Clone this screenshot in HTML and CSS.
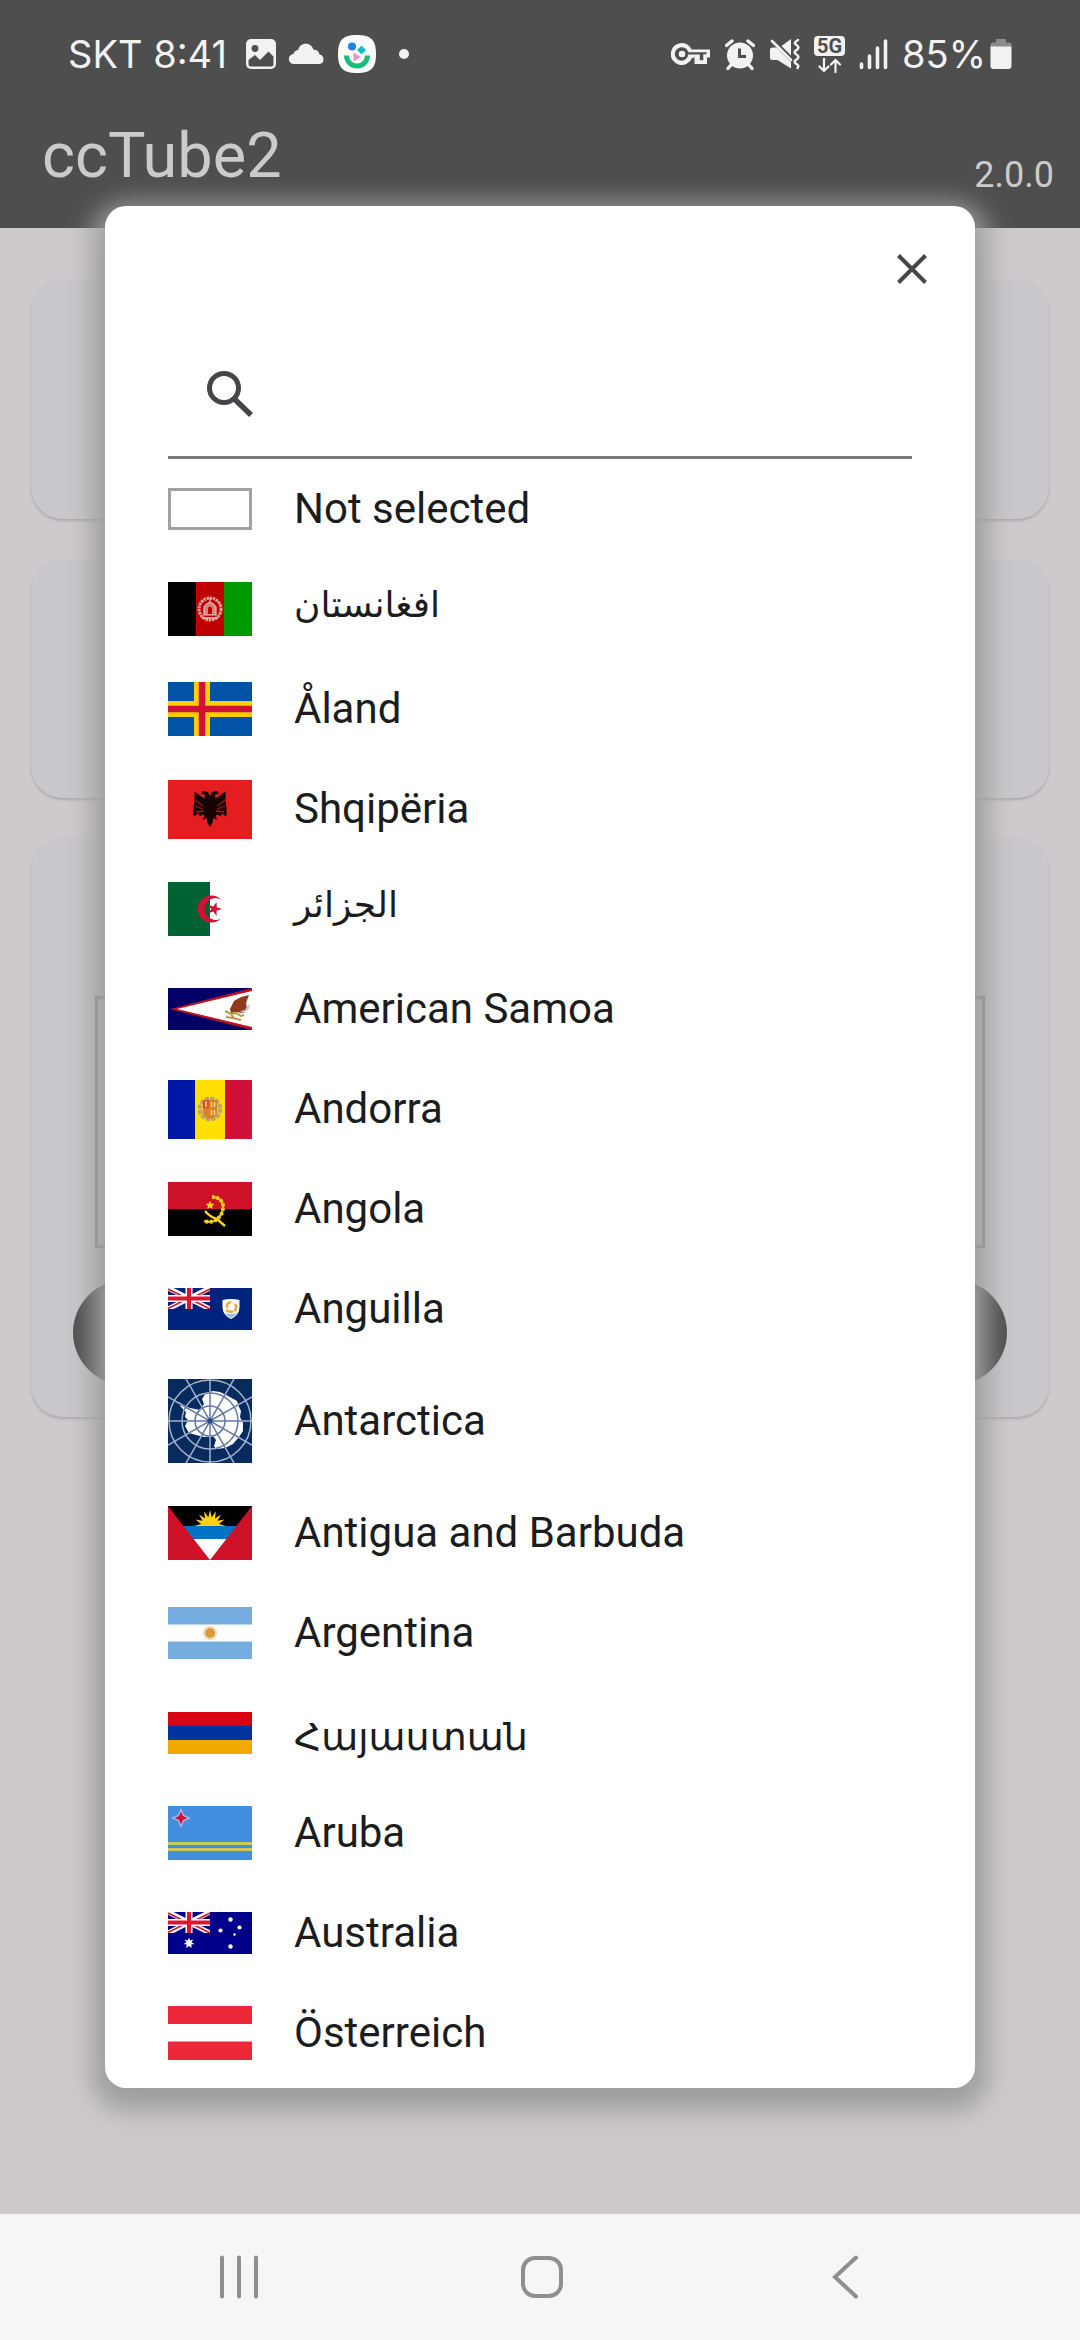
FILE: index.html
```
<!DOCTYPE html>
<html lang="en">
  <head>
    <meta charset="UTF-8">
    <meta name="viewport" content="width=device-width, initial-scale=1">
    <title>ccTube2</title>
    <link rel="stylesheet" href="styles.css">
  </head>
  <body>
    <svg class="defs" aria-hidden="true">
      <symbol id="union" viewBox="0 0 42 21">
        <path class="uj-w" stroke-width="5" d="M0 0L42 21M42 0L0 21"/>
        <path class="uj-r" stroke-width="1.6" d="M0 1L21 11.5M42 1L21 11.5M0 20.5L21 10M42 21L21 10.5"/>
        <path class="uj-w" stroke-width="7" d="M21 0V21M0 10.5H42"/>
        <path class="uj-r" stroke-width="4" d="M21 0V21M0 10.5H42"/>
      </symbol>
    </svg>

    <header class="top">
      <div class="statusbar">
        <div class="status-group status-left">
          <span class="status-text">SKT 8:41</span>
          <svg width="32" height="32" viewBox="0 0 32 32">
            <rect x="1" y="1" width="30" height="30" rx="5" fill="#f2f2f2"/>
            <circle cx="10" cy="10.500" r="3.400" fill="#4e4e4e"/>
            <path d="M3.500 22l6.500-5 5 5 8.500-8.500 5 5V26a2.500 2.500 0 0 1-2.500 2.500H6A2.500 2.500 0 0 1 3.500 26z" fill="#4e4e4e"/>
          </svg>
          <svg width="36" height="22" viewBox="0 0 36 22">
            <path d="M5 21a5 5 0 0 1-.5-10C5 8 7 7 9 7.200 10 3 13 .8 16.500.8c4.500 0 7 2.700 8 6 3-.4 5.500 1.700 6 4.700A4.900 4.900 0 0 1 31 21z" fill="#f2f2f2"/>
          </svg>
          <svg width="40" height="40" viewBox="0 0 40 40">
            <path d="M20 1c14 0 19 5 19 19s-5 19-19 19S1 34 1 20 6 1 20 1z" fill="#fff"/>
            <circle cx="15" cy="12.500" r="4" fill="#1c83e8"/>
            <path d="M24.500 11.500l4.500 4.500-4.500 4.500L20 16z" fill="#11bfc4"/>
            <path d="M16.500 18.500l7 4.500-7 4.500z" fill="#f48fc6"/>
            <path d="M9.500 21.500a10.500 10.500 0 0 0 21 0" fill="none" stroke="#17bd79" stroke-width="5"/>
          </svg>
          <span class="dot"></span>
        </div>
        <div class="status-group status-right">
          <svg width="40" height="24" viewBox="0 0 40 24">
            <path d="M11 1a11 11 0 1 0 10 15h2v-1.500h.500V22H36v-6.500h3V7.500H20.500A11 11 0 0 0 11 1zm0 4.300c3.500 0 5.500 2.200 6.200 5H35.500v1.900h-3.200v6h-3.500v-5.700H17.200A6.700 6.700 0 1 1 11 5.300z" fill="#f2f2f2" fill-rule="evenodd"/>
            <circle cx="11" cy="12" r="3.300" fill="#f2f2f2"/>
          </svg>
          <svg width="30" height="31" viewBox="0 0 30 31">
            <circle cx="15" cy="16.500" r="13" fill="#f2f2f2"/>
            <path d="M1.500 6.500L7 2M28.500 6.500L23 2M6 26l-3 3.500M24 26l3 3.500" stroke="#f2f2f2" stroke-width="3.400" stroke-linecap="round"/>
            <path d="M14.500 9.500v8H21" fill="none" stroke="#4e4e4e" stroke-width="3"/>
          </svg>
          <svg width="31" height="32" viewBox="0 0 31 32">
            <path d="M1 12q0-2.500 2.500-2.500h4L22 24v6.500L8.500 22h-5Q1 22 1 19.500zM12.500 8L22 1v16.500z" fill="#f2f2f2"/>
            <path d="M3 3l19 19" stroke="#f2f2f2" stroke-width="2.600" stroke-linecap="round"/>
            <path d="M29 2c-4 2.500-4 3.500-1.500 5s2.500 3.500 0 5-2.500 3 0 4.500 2.500 3.500 0 5-2.500 3 0 4.500 2 2.500 1 4" fill="none" stroke="#f2f2f2" stroke-width="2.600" stroke-linecap="round"/>
          </svg>
          <span class="net">
            <span class="net-badge">5G</span>
            <svg width="24" height="15" viewBox="0 0 24 15">
              <path d="M6 0v13M1.500 8.500L6 13l4.500-4.500M17.500 14V2M13 6.500L17.500 2 22 6.500" fill="none" stroke="#f2f2f2" stroke-width="2.200" stroke-linecap="round"/>
            </svg>
          </span>
          <svg width="29" height="32" viewBox="0 0 29 32">
            <path d="M2.500 26v3.500M10.500 18v11.500M18.500 10v19.500M26.500 3v26.500" stroke="#f2f2f2" stroke-width="3.600" stroke-linecap="round"/>
          </svg>
          <span class="battery">
            <span class="status-text">85%</span>
            <svg width="22" height="32" viewBox="0 0 22 32">
              <path d="M.5 9V7q0-2.500 2.500-2.500h3V1h10v3.500h3q2.500 0 2.500 2.500v2z" fill="#8c8c8c"/>
              <path d="M.5 8.500h21V28q0 3-3 3h-15q-3 0-3-3z" fill="#f2f2f2"/>
            </svg>
          </span>
        </div>
      </div>
      <div class="appbar">
        <h1 class="app-title">ccTube2</h1>
        <span class="version">2.0.0</span>
      </div>
    </header>

    <main class="content">
      <div class="card"></div>
      <div class="card"></div>
      <div class="card card-tall">
        <div class="card-box"></div>
        <div class="card-pill"></div>
      </div>
    </main>

    <nav class="navbar">
      <button class="nav-btn" type="button" aria-label="Recents">
        <svg width="44" height="44" viewBox="0 0 44 44"><path d="M5 2.500v39M22 2.500v39M39 2.500v39"/></svg>
      </button>
      <button class="nav-btn" type="button" aria-label="Home">
        <svg width="44" height="44" viewBox="0 0 44 44"><rect x="3" y="3" width="38" height="38" rx="12"/></svg>
      </button>
      <button class="nav-btn" type="button" aria-label="Back">
        <svg width="44" height="44" viewBox="0 0 44 44"><path d="M33 2.500L12 22l21 19.500"/></svg>
      </button>
    </nav>

    <div class="overlay">
      <section class="dialog" role="dialog" aria-label="Country">
        <div class="dialog-head">
          <button class="close" type="button" aria-label="Close">
            <svg width="36" height="36" viewBox="0 0 36 36"><path d="M4.500 4.500l27 27M31.500 4.500l-27 27" stroke="#46464a" stroke-width="4"/></svg>
          </button>
        </div>
        <div class="search">
          <label for="search" aria-label="Search">
            <svg width="48" height="48" viewBox="0 0 48 48">
              <circle cx="18" cy="18" r="14.500" fill="none" stroke="#46464a" stroke-width="5"/>
              <path d="M29 29.500L45 45" stroke="#46464a" stroke-width="5.500"/>
            </svg>
          </label>
          <input id="search" class="search-input" type="text">
        </div>

        <ul class="list">
          <li><button class="row" type="button">
            <span class="flag-empty"></span>
            <span class="name">Not selected</span>
          </button></li>

          <li><button class="row" type="button">
            <svg class="flag" width="84" height="54" viewBox="0 0 84 54">
              <rect width="28" height="54" fill="#000"/>
              <rect x="28" width="28" height="54" fill="#bf0000"/>
              <rect x="56" width="28" height="54" fill="#009900"/>
              <circle cx="42" cy="27" r="11" fill="none" stroke="#e6a09a" stroke-width="3" stroke-dasharray="2.500 .7"/>
              <path d="M36 33v-8q6-9 12 0v8zM42 16v4" fill="#d98078" stroke="#eec0bb" stroke-width="1.200"/>
              <path d="M40 32v-6q2-3 4 0v6z" fill="#bf0000"/>
              <path d="M34 36h16" stroke="#eec0bb" stroke-width="1.500"/>
            </svg>
            <span class="name name-arabic" lang="fa">افغانستان</span>
          </button></li>

          <li><button class="row" type="button">
            <svg class="flag" width="84" height="54" viewBox="0 0 84 54">
              <rect width="84" height="54" fill="#0053a5"/>
              <path d="M34 0v54M0 27h84" stroke="#ffce00" stroke-width="16"/>
              <path d="M34 0v54M0 27h84" stroke="#d21034" stroke-width="6.500"/>
            </svg>
            <span class="name">Åland</span>
          </button></li>

          <li><button class="row" type="button">
            <svg class="flag" width="84" height="59" viewBox="0 0 84 59">
              <rect width="84" height="59" fill="#e41e20"/>
              <path d="M42 16l-2-4-5-1-2 3 4 .500-.5 4-3-2-7-5v9l-1 8v8l5-3 .5 3 4-2 1.500 1.500-2 4 4-2 1 5 2.500 4 2.500-4 1-5 4 2-2-4 1.500-1.500 4 2 .5-3 5 3v-8l-1-8v-9l-7 5-3 2-.5-4 4-.5-2-3-5 1z" fill="#160404"/>
              <path d="M27 20l8 6M27 26l8 3M28 32l8-1M57 20l-8 6M57 26l-8 3M56 32l-8-1" stroke="#a51416" stroke-width="1.300"/>
            </svg>
            <span class="name">Shqipëria</span>
          </button></li>

          <li><button class="row" type="button">
            <svg class="flag" width="84" height="54" viewBox="0 0 84 54">
              <rect width="84" height="54" fill="#fff"/>
              <rect width="42" height="54" fill="#006233"/>
              <path d="M53 17.500a13.500 13.500 0 1 0 0 19 11 11 0 1 1 0-19z" fill="#d21034"/>
              <path d="M54 27l-5.500 1.700.1 5.300-3.300-4.500-5.300 1.800 3.300-4.300-3.300-4.300 5.300 1.700 3.300-4.400.1 5.300z" fill="#d21034"/>
            </svg>
            <span class="name name-arabic" lang="ar">الجزائر</span>
          </button></li>

          <li><button class="row" type="button">
            <svg class="flag" width="84" height="42" viewBox="0 0 84 42">
              <rect width="84" height="42" fill="#000066"/>
              <path d="M84 0L2 21l82 21z" fill="#bd1021"/>
              <path d="M84 3L9 21l75 18z" fill="#fff"/>
              <path d="M81 7l-8 2-7 4-4 8 1 4 5-1 7 1 4-5-1-5z" fill="#8f3a1c"/>
              <path d="M72 23l5-1 2-4 3-2-1 5-5 4z" fill="#c5ccd6"/>
              <path d="M57 23l6 3 5-1 5 3 3-1M58 29l7 1 8 2M62 25l4 5" fill="none" stroke="#b89a3a" stroke-width="2"/>
            </svg>
            <span class="name">American Samoa</span>
          </button></li>

          <li><button class="row" type="button">
            <svg class="flag" width="84" height="59" viewBox="0 0 84 59">
              <rect width="27" height="59" fill="#0018a8"/>
              <rect x="27" width="30" height="59" fill="#fedf00"/>
              <rect x="57" width="27" height="59" fill="#d0103a"/>
              <circle cx="42" cy="29" r="10.500" fill="#e9b95a" stroke="#b5a26c" stroke-width="3.500" stroke-dasharray="4 1.500"/>
              <path d="M35 20h14v13q-1 5-7 6-6-1-7-6z" fill="#d9812c"/>
              <path d="M35 20h6v8h-6z" fill="#d5521f"/>
              <path d="M38 21v6M43.500 22v5M46.500 22v5M43.500 30v5M46.500 30v5" stroke="#f5d878" stroke-width="1.500"/>
            </svg>
            <span class="name">Andorra</span>
          </button></li>

          <li><button class="row" type="button">
            <svg class="flag" width="84" height="54" viewBox="0 0 84 54">
              <rect width="84" height="54" fill="#000"/>
              <rect width="84" height="27" fill="#ce1126"/>
              <path d="M44 15q9 0 11 8 1 9-7 15-5 3-12 1" fill="none" stroke="#e9bd1d" stroke-width="2.500"/>
              <path d="M44 15q9 0 11 8 1 9-7 15-5 3-12 1" fill="none" stroke="#f9d616" stroke-width="4" stroke-dasharray="2 2.500"/>
              <path d="M37 29q5 6 12 8l8 7" fill="none" stroke="#f9d616" stroke-width="2.400"/>
              <path d="M42 19l1.300 2.600 3 .3-2.200 2 .6 2.900-2.700-1.400-2.700 1.400.6-2.900-2.200-2 3-.3z" fill="#f9d616"/>
            </svg>
            <span class="name">Angola</span>
          </button></li>

          <li><button class="row" type="button">
            <svg class="flag" width="84" height="42" viewBox="0 0 84 42">
              <rect width="84" height="42" fill="#00247d"/>
              <use href="#union" width="42" height="21"/>
              <path d="M54.500 12q4-1 8.500-1t8.500 1v7q0 8-8.500 12-8.500-4-8.500-12z" fill="#fff"/>
              <path d="M57 25q6 2 12 0-2 3.500-6 5-4-1.500-6-5z" fill="#8fc5e8"/>
              <path d="M59 20q-1-5 4-6M67 16q3 4-1 7M58 22q4 3 7 1" fill="none" stroke="#f0a544" stroke-width="2.400"/>
            </svg>
            <span class="name">Anguilla</span>
          </button></li>

          <li><button class="row" type="button">
            <svg class="flag" width="84" height="84" viewBox="0 0 84 84">
              <defs>
                <path id="land" d="M11 23l6 4 5 2 10 2 4-6-2-5 4-6 7-2 7 1 8 4 9 5 2 6 2 4-1 6 3 6v8l-4 6-6 7-8 4-9 1-2-3 2-6-3-4-9 1-8-2-7-2-4-7 3-6-3-3 1-5-5-5z"/>
                <clipPath id="land-clip"><use href="#land"/></clipPath>
                <g id="grid">
                  <circle cx="42" cy="42" r="41"/>
                  <circle cx="42" cy="42" r="28"/>
                  <circle cx="42" cy="42" r="15"/>
                  <path d="M42 0V84M0 42H84M18 0L66 84M66 0L18 84M0 18L84 66M84 18L0 66"/>
                </g>
              </defs>
              <rect width="84" height="84" fill="#072b5f"/>
              <use href="#grid" class="grid-sea"/>
              <use href="#land" fill="#fff"/>
              <g clip-path="url(#land-clip)"><use href="#grid" class="grid-land"/></g>
              <circle cx="42" cy="42" r="2.500" fill="#2b4a7c"/>
            </svg>
            <span class="name">Antarctica</span>
          </button></li>

          <li><button class="row" type="button">
            <svg class="flag" width="84" height="54" viewBox="0 0 84 54">
              <rect width="84" height="54" fill="#000"/>
              <path d="M26 20l7.200-2-5.800-4.500 7.200 1.300-3.700-6.300 6.200 4L36 5.200l4.300 6L42 4l1.700 7.200 4.300-6-1.100 7.300 6.200-4-3.700 6.300 7.200-1.300-5.800 4.500 7.200 2z" fill="#fcd116"/>
              <rect y="20" width="84" height="13" fill="#0072c6"/>
              <rect y="33" width="84" height="21" fill="#fff"/>
              <path d="M0 0l42 54H0zM84 0v54H42z" fill="#ce1126"/>
            </svg>
            <span class="name">Antigua and Barbuda</span>
          </button></li>

          <li><button class="row" type="button">
            <svg class="flag" width="84" height="52" viewBox="0 0 84 52">
              <rect width="84" height="52" fill="#74acdf"/>
              <rect y="17.500" width="84" height="17" fill="#fff"/>
              <circle cx="42" cy="26" r="6" fill="none" stroke="#f0c691" stroke-width="2" stroke-dasharray="1.500 1"/>
              <circle cx="42" cy="26" r="5" fill="#e0963a"/>
            </svg>
            <span class="name">Argentina</span>
          </button></li>

          <li><button class="row" type="button">
            <svg class="flag" width="84" height="42" viewBox="0 0 84 42">
              <rect width="84" height="14" fill="#d90012"/>
              <rect y="14" width="84" height="14" fill="#0033a0"/>
              <rect y="28" width="84" height="14" fill="#f2a800"/>
            </svg>
            <span class="name name-armenian" lang="hy">Հայաստան</span>
          </button></li>

          <li><button class="row" type="button">
            <svg class="flag" width="84" height="54" viewBox="0 0 84 54">
              <rect width="84" height="54" fill="#418fde"/>
              <path d="M0 37.500h84M0 43.500h84" stroke="#c9c95c" stroke-width="3"/>
              <path d="M13 2l3 7 7 3-7 3-3 7-3-7-7-3 7-3z" fill="#b9b4df"/>
              <path d="M13 5.500l2 4.500 4.500 2-4.500 2-2 4.500-2-4.500L6.500 12l4.500-2z" fill="#d3103f"/>
            </svg>
            <span class="name">Aruba</span>
          </button></li>

          <li><button class="row" type="button">
            <svg class="flag" width="84" height="42" viewBox="0 0 84 42">
              <rect width="84" height="42" fill="#00008b"/>
              <use href="#union" width="42" height="21"/>
              <path d="M21 25.500l1.200 3.100 3.100-1.200-1.700 2.900 2.900 1.700-3.300.6.600 3.300-2.800-2-2.800 2 .6-3.300-3.300-.6 2.900-1.700-1.700-2.900 3.100 1.200z" fill="#fff"/>
              <g fill="#fff">
                <circle cx="62.500" cy="7.500" r="2.200"/>
                <circle cx="52.500" cy="18.500" r="2.100"/>
                <circle cx="71.500" cy="15.500" r="2.100"/>
                <circle cx="66.500" cy="22.500" r="1.200"/>
                <circle cx="62.500" cy="34.500" r="2.200"/>
              </g>
            </svg>
            <span class="name">Australia</span>
          </button></li>

          <li><button class="row" type="button">
            <svg class="flag" width="84" height="54" viewBox="0 0 84 54">
              <rect width="84" height="54" fill="#ed2939"/>
              <rect y="18" width="84" height="17.500" fill="#fff"/>
            </svg>
            <span class="name">Österreich</span>
          </button></li>
        </ul>
      </section>
    </div>
  </body>
</html>
```
FILE: styles.css
```
* {
  box-sizing:border-box;
}
body {
  margin:0;
  min-height:100vh;
  position:relative;
  display:flex;
  flex-direction:column;
  font-family:Roboto, "Noto Sans", "DejaVu Sans", sans-serif;
  color:#1b1c1d;
  background-color:#cec9cd;
}
button {
  border:0;
  padding:0;
  background:none;
  font:inherit;
  color:inherit;
  cursor:pointer;
}
svg {
  display:block;
  flex:none;
}
.defs {
  position:absolute;
  width:0;
  height:0;
}

/* status bar + app bar */
.top {
  background-color:#4e4e4e;
}
.statusbar {
  height:108px;
  padding:0 68px;
  display:flex;
  justify-content:space-between;
  align-items:center;
}
.status-group {
  display:flex;
  align-items:center;
}
.status-left {
  gap:12px;
}
.status-left .status-text {
  margin-right:6px;
}
.status-right {
  gap:14px;
}
.status-text {
  font-family:Inter, Roboto, sans-serif;
  font-size:38px;
  line-height:48px;
  color:#f2f2f2;
}
.dot {
  width:10px;
  height:10px;
  margin-left:10px;
  border-radius:50%;
  background-color:#f2f2f2;
}
.battery {
  display:flex;
  align-items:center;
  gap:4px;
}
.net {
  display:flex;
  flex-direction:column;
  align-items:center;
  gap:2px;
}
.net-badge {
  padding:0 3px;
  border-radius:4px;
  font-size:20px;
  line-height:20px;
  font-weight:bold;
  color:#4e4e4e;
  background-color:#f2f2f2;
}
.appbar {
  height:120px;
  padding:0 26px 0 42px;
  display:flex;
  justify-content:space-between;
  align-items:flex-start;
  color:#cbcbcb;
}
.app-title {
  margin:0;
  padding-top:10px;
  font-size:63px;
  line-height:76px;
  font-weight:normal;
}
.version {
  padding-top:46px;
  font-size:36px;
  line-height:42px;
}

/* page behind the dialog */
.content {
  flex:1;
  padding:52px 31px 0;
  display:flex;
  flex-direction:column;
  gap:40px;
}
.card {
  min-height:239px;
  border-radius:32px;
  background-color:#c9c7cb;
  box-shadow:0 2px 3px rgba(0,0,0,0.16);
}
.card-tall {
  min-height:579px;
  padding:32px 42px;
  display:flex;
  flex-direction:column;
  justify-content:flex-end;
  gap:32px;
}
.card-box {
  height:252px;
  margin:0 22px;
  border:3px solid #8c8c8c;
}
.card-pill {
  height:105px;
  border-radius:53px;
  background-color:#4e4e4e;
}

.navbar {
  height:126px;
  padding:0 84px 0 88px;
  display:grid;
  grid-template-columns:repeat(3, 1fr);
  background-color:#f6f6f8;
}
.nav-btn {
  display:flex;
  justify-content:center;
  align-items:center;
}
.nav-btn svg {
  fill:none;
  stroke:#8f8f91;
  stroke-width:4;
  stroke-linecap:round;
}

/* country dialog */
.overlay {
  position:absolute;
  inset:0;
  padding:206px 105px 252px;
}
.dialog {
  height:100%;
  display:flex;
  flex-direction:column;
  overflow:hidden;
  border-radius:21px;
  background-color:#fff;
  box-shadow:0 10px 26px 13px #9e9e9e;
}
.dialog-head {
  display:flex;
  justify-content:flex-end;
}
.close {
  width:126px;
  height:126px;
  display:flex;
  justify-content:center;
  align-items:center;
}
.search {
  height:127px;
  margin:0 63px;
  padding-left:38px;
  display:flex;
  align-items:center;
  gap:20px;
  border-bottom:3px solid #7b7b7d;
}
.search-input {
  flex:1;
  min-width:0;
  height:100%;
  padding:0;
  border:0;
  outline:0;
  font:inherit;
  font-size:42px;
  background:none;
}
.list {
  flex:1;
  min-height:0;
  margin:0;
  padding:0 63px;
  list-style:none;
  overflow-y:auto;
  scrollbar-width:none;
}
.row {
  width:100%;
  min-height:100px;
  padding:20px 0;
  display:flex;
  align-items:center;
  gap:42px;
  text-align:left;
}
.flag-empty {
  width:84px;
  height:42px;
  border:3px solid #a2a2a2;
}
.name {
  font-size:42px;
  line-height:56px;
}
.name-arabic {
  padding-bottom:8px;
  font-size:36px;
  line-height:48px;
}
.name-armenian {
  padding-top:8px;
  font-size:38px;
  line-height:48px;
}

/* flag parts */
.uj-w {
  fill:none;
  stroke:#fff;
}
.uj-r {
  fill:none;
  stroke:#e0142c;
}
.grid-sea {
  fill:none;
  stroke:#a3b3cf;
  stroke-width:1.5px;
}
.grid-land {
  fill:none;
  stroke:#6079a5;
  stroke-width:1.5px;
}
```
